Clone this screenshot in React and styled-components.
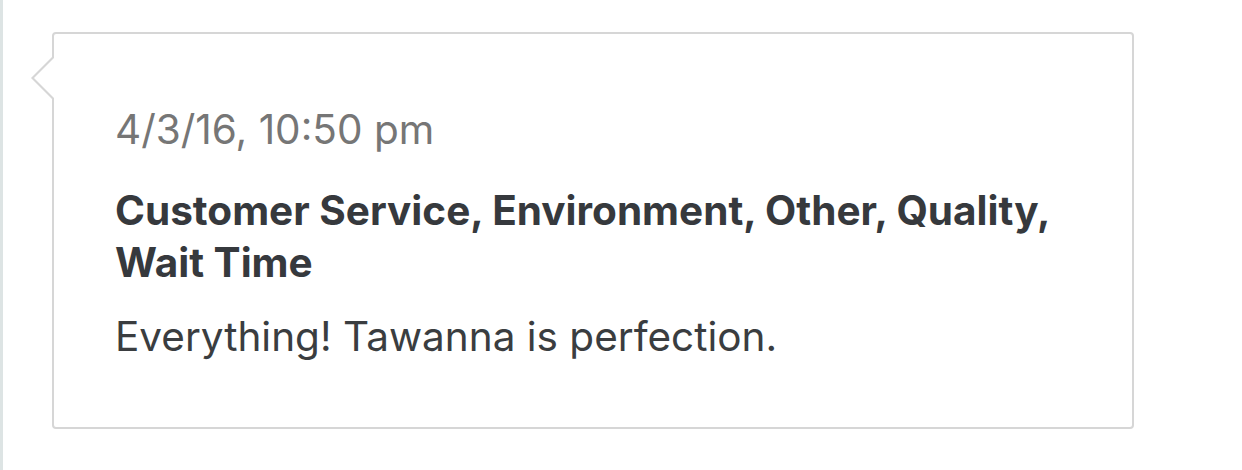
import React from "react";
import styled, { createGlobalStyle } from "styled-components";

const Global = createGlobalStyle`
  html, body { margin: 0; padding: 0; background: #ffffff; }
  body { font-family: Inter, "Open Sans", sans-serif; -webkit-font-smoothing: antialiased; }
`;

const Page = styled.div`
  box-sizing: border-box;
  width: 1242px;
  height: 470px;
  border-left: 3px solid #dde4e4;
  padding: 32px 0 0 49px;
`;

const Card = styled.div`
  position: relative;
  box-sizing: border-box;
  width: 1082px;
  height: 397px;
  border: 2px solid #d6d6d6;
  border-radius: 4px;
  background: #fff;
  padding: 70px 60px 0 61px;

  &::before,
  &::after {
    content: "";
    position: absolute;
    width: 0;
    height: 0;
    border-style: solid;
  }
  &::before {
    top: 22px;
    left: -23px;
    border-width: 22px 22px 22px 0;
    border-color: transparent #d6d6d6 transparent transparent;
  }
  &::after {
    top: 23px;
    left: -20px;
    border-width: 21px 21px 21px 0;
    border-color: transparent #ffffff transparent transparent;
  }
`;

const Stamp = styled.div`
  font-size: 40.5px;
  line-height: 52px;
  color: #767676;
  margin: 0 0 29px;
`;

const Reasons = styled.div`
  font-size: 40.5px;
  font-weight: 700;
  line-height: 52px;
  color: #36393d;
`;

const Comment = styled.div`
  font-size: 40.5px;
  line-height: 52px;
  color: #3a3d40;
  margin-top: 22px;
`;

export default function App() {
  return (
    <>
      <Global />
      <Page>
        <Card>
          <Stamp>4/3/16, 10:50 pm</Stamp>
          <Reasons>
            Customer Service, Environment, Other, Quality,
            <br />
            Wait Time
          </Reasons>
          <Comment>Everything! Tawanna is perfection.</Comment>
        </Card>
      </Page>
    </>
  );
}
